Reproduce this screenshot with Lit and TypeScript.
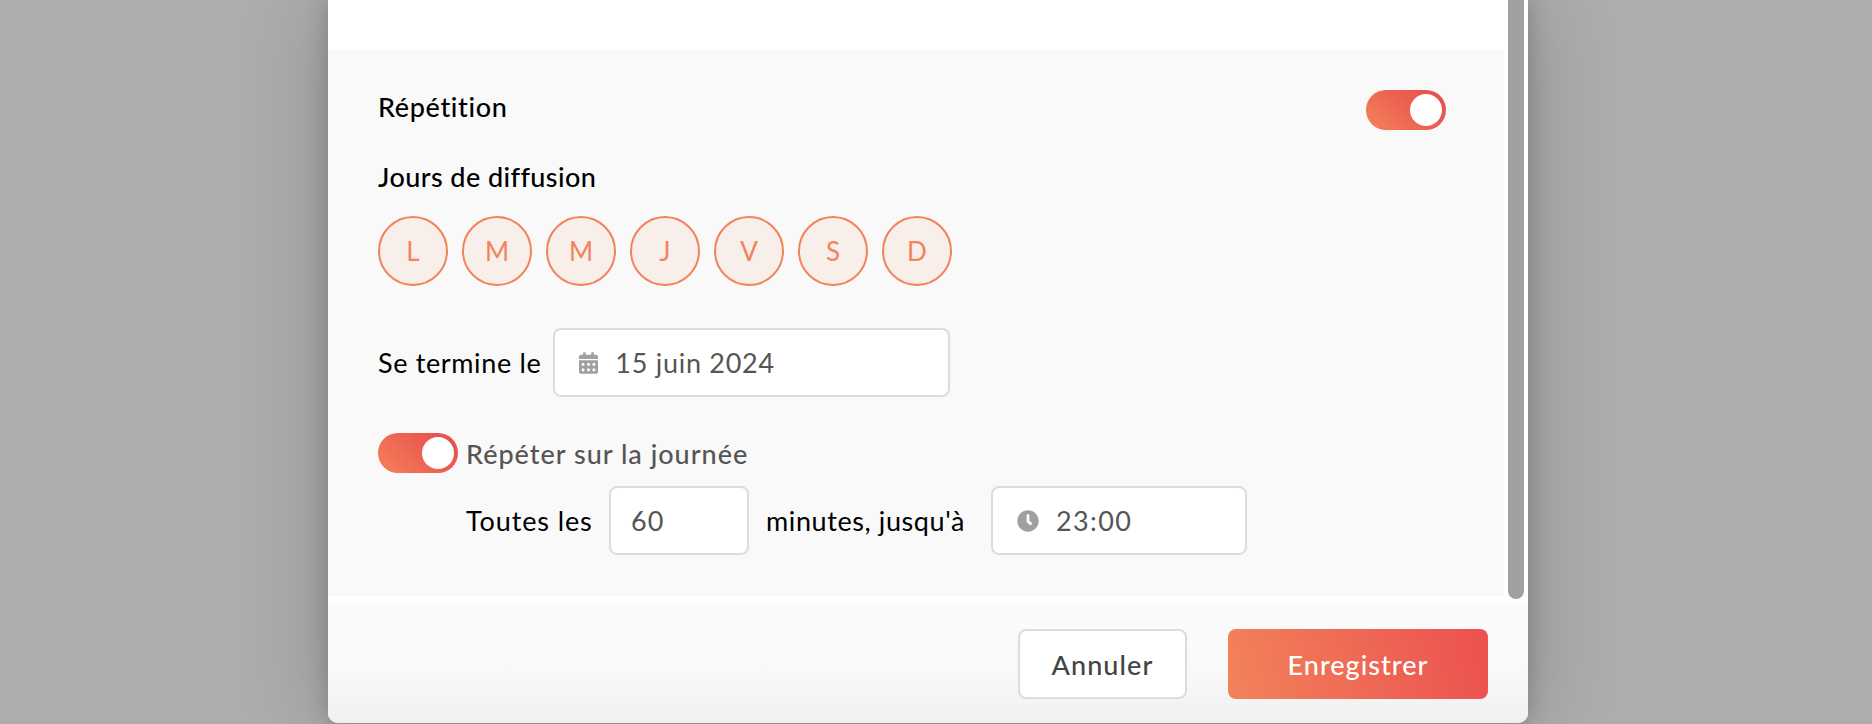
import { LitElement, html, css } from "lit";
import { customElement } from "lit/decorators.js";

const CALENDAR = "M0 464c0 26.5 21.5 48 48 48h352c26.5 0 48-21.5 48-48V192H0v272zm320-196c0-6.6 5.4-12 12-12h40c6.6 0 12 5.4 12 12v40c0 6.6-5.4 12-12 12h-40c-6.6 0-12-5.4-12-12v-40zm0 128c0-6.6 5.4-12 12-12h40c6.6 0 12 5.4 12 12v40c0 6.6-5.4 12-12 12h-40c-6.6 0-12-5.4-12-12v-40zM192 268c0-6.6 5.4-12 12-12h40c6.6 0 12 5.4 12 12v40c0 6.6-5.4 12-12 12h-40c-6.6 0-12-5.4-12-12v-40zm0 128c0-6.6 5.4-12 12-12h40c6.6 0 12 5.4 12 12v40c0 6.6-5.4 12-12 12h-40c-6.6 0-12-5.4-12-12v-40zM64 268c0-6.6 5.4-12 12-12h40c6.6 0 12 5.4 12 12v40c0 6.6-5.4 12-12 12H76c-6.6 0-12-5.4-12-12v-40zm0 128c0-6.6 5.4-12 12-12h40c6.6 0 12 5.4 12 12v40c0 6.6-5.4 12-12 12H76c-6.6 0-12-5.4-12-12v-40zM400 64h-48V16c0-8.8-7.2-16-16-16h-32c-8.8 0-16 7.2-16 16v48H160V16c0-8.8-7.2-16-16-16h-32c-8.8 0-16 7.2-16 16v48H48C21.5 64 0 85.5 0 112v48h448v-48c0-26.5-21.5-48-48-48z";
const CLOCK = "M256,8C119,8,8,119,8,256S119,504,256,504,504,393,504,256,393,8,256,8Zm92.49,313h0l-20,25a16,16,0,0,1-22.49,2.5h0l-67-49.72a40,40,0,0,1-15-31.23V112a16,16,0,0,1,16-16h32a16,16,0,0,1,16,16V256l58,42.5A16,16,0,0,1,348.49,321Z";

@customElement("app-root")
export class AppRoot extends LitElement {
  static styles = css`
    :host {
      display: block;
      height: 724px;
      overflow: hidden;
      font-family: "Lato", "Noto Sans", sans-serif;
      font-size: 27px;
      color: #000;
    }
    .backdrop {
      height: 724px;
      box-sizing: border-box;
      background: #adadad;
      padding-right: 16px;
      display: flex;
      justify-content: center;
      align-items: flex-start;
      overflow: hidden;
    }
    .modal {
      width: 1200px;
      height: 723px;
      flex: none;
      background: #fff;
      border-radius: 0 0 10px 10px;
      box-shadow: 0 0 22px rgba(0, 0, 0, 0.2), 0 0 90px rgba(0, 0, 0, 0.2);
      display: flex;
      flex-direction: column;
      overflow: hidden;
    }
    .body {
      height: 604px;
      flex: none;
      display: flex;
    }
    .main {
      flex: 1;
      padding: 50px 0 8px;
      display: flex;
    }
    .section {
      flex: 1;
      background: #f9f9f9;
      padding: 40px 58px 0 50px;
    }
    .gutter {
      width: 24px;
      box-sizing: border-box;
      padding: 0 4px 5px;
      display: flex;
    }
    .thumb {
      flex: 1;
      background: #a0a0a0;
      border-radius: 0 0 8px 8px;
    }
    .row {
      display: flex;
      align-items: center;
    }
    .between {
      justify-content: space-between;
      height: 40px;
    }
    .between .strong {
      margin-bottom: 7px;
      letter-spacing: 0.65px;
    }
    .strong {
      font-weight: 500;
    }
    .days-title {
      margin-top: 29px;
      line-height: 36px;
      letter-spacing: 0.42px;
    }
    .days {
      display: flex;
      gap: 14px;
      margin-top: 21px;
    }
    .day {
      width: 70px;
      height: 70px;
      box-sizing: border-box;
      border-radius: 50%;
      border: 2px solid #f2835a;
      background: #f8eeea;
      color: #f2835a;
      font-size: 26px;
      display: flex;
      align-items: center;
      justify-content: center;
    }
    .switch {
      width: 80px;
      height: 40px;
      flex: none;
      box-sizing: border-box;
      border-radius: 20px;
      padding: 4px;
      display: flex;
      justify-content: flex-end;
      background: linear-gradient(45deg, #f2835a 0%, #ec5a50 65%, #e25050 100%);
    }
    .knob {
      width: 32px;
      height: 32px;
      border-radius: 50%;
      background: #fff;
    }
    .end {
      margin-top: 42px;
      gap: 12px;
    }
    .end-label {
      letter-spacing: 0.64px;
    }
    .field {
      height: 69px;
      box-sizing: border-box;
      background: #fff;
      border: 2px solid #dcdcdc;
      border-radius: 8px;
      color: #555;
      display: flex;
      align-items: center;
    }
    .date {
      width: 397px;
      padding-left: 24px;
      gap: 17px;
      letter-spacing: 0.72px;
    }
    .date svg {
      width: 19px;
      height: 22px;
    }
    svg {
      fill: #a0a0a0;
      flex: none;
    }
    .repeat {
      margin-top: 36px;
      gap: 8px;
      color: #555;
      font-weight: 500;
      letter-spacing: 1px;
    }
    .every {
      margin-top: 13px;
      padding-left: 88px;
    }
    .every .label1 {
      width: 143px;
      letter-spacing: 0.88px;
    }
    .num {
      width: 140px;
      padding-left: 20px;
      letter-spacing: 1.2px;
    }
    .label2 {
      margin-left: 17px;
      width: 225px;
      letter-spacing: 0.6px;
    }
    .time {
      width: 256px;
      padding-left: 24px;
      gap: 17px;
      letter-spacing: 1.4px;
    }
    .time svg {
      width: 22px;
      height: 22px;
    }
    .footer {
      flex: 1;
      background: linear-gradient(#fbfbfb 0%, #f9f9f9 55%, #f0f0f0 100%);
      padding: 25px 40px 0 0;
      display: flex;
      justify-content: flex-end;
      align-items: flex-start;
      gap: 41px;
    }
    .btn {
      height: 70px;
      box-sizing: border-box;
      border-radius: 8px;
      font-weight: 500;
      display: flex;
      align-items: center;
      justify-content: center;
    }
    .cancel {
      width: 169px;
      background: #fff;
      border: 2px solid #dcdcdc;
      color: #444;
      letter-spacing: 1.1px;
    }
    .save {
      width: 260px;
      color: #fff;
      letter-spacing: 1px;
      background: linear-gradient(75deg, #f2835a 0%, #ec5050 100%);
    }
  `;

  render() {
    const days = ["L", "M", "M", "J", "V", "S", "D"];
    return html`
      <div class="backdrop">
        <div class="modal">
          <div class="body">
            <div class="main">
              <div class="section">
                <div class="row between">
                  <span class="strong">Répétition</span>
                  <div class="switch"><div class="knob"></div></div>
                </div>
                <div class="days-title strong">Jours de diffusion</div>
                <div class="days">
                  ${days.map((d) => html`<div class="day">${d}</div>`)}
                </div>
                <div class="row end">
                  <span class="end-label">Se termine le</span>
                  <div class="field date">
                    <svg viewBox="0 0 448 512"><path d="${CALENDAR}"></path></svg>
                    <span>15 juin 2024</span>
                  </div>
                </div>
                <div class="row repeat">
                  <div class="switch"><div class="knob"></div></div>
                  <span>Répéter sur la journée</span>
                </div>
                <div class="row every">
                  <span class="label1">Toutes les</span>
                  <div class="field num">60</div>
                  <span class="label2">minutes, jusqu'à</span>
                  <div class="field time">
                    <svg viewBox="0 0 512 512"><path d="${CLOCK}"></path></svg>
                    <span>23:00</span>
                  </div>
                </div>
              </div>
            </div>
            <div class="gutter"><div class="thumb"></div></div>
          </div>
          <div class="footer">
            <div class="btn cancel">Annuler</div>
            <div class="btn save">Enregistrer</div>
          </div>
        </div>
      </div>
    `;
  }
}
